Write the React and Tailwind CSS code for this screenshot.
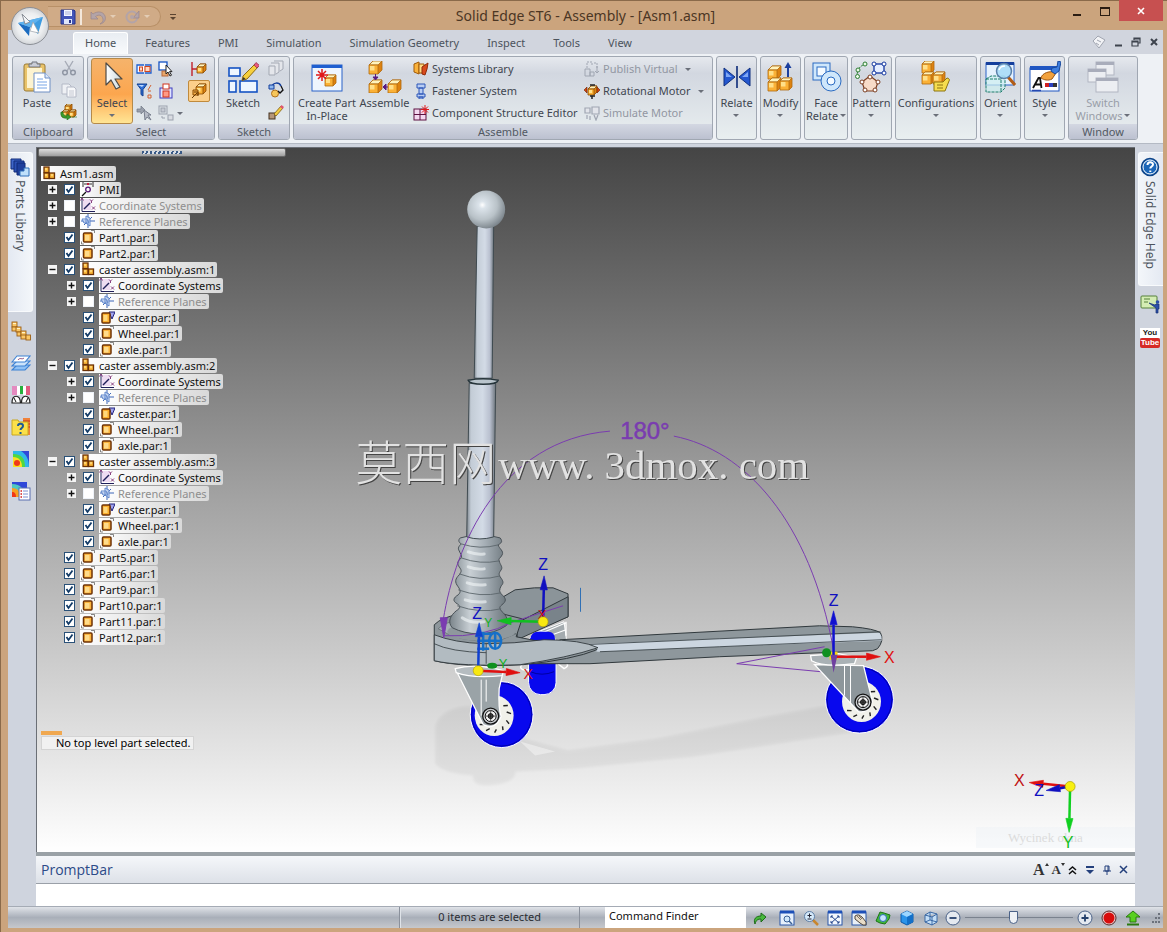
import React from "react";

/* ---------- small drawing helpers ---------- */

function Cube({ x, y, s }) {
  const d = Math.round(s * 0.28);
  return (
    <g stroke={s > 10 ? "#b06a10" : "#8a4a00"} strokeWidth="0.8" strokeLinejoin="round">
      <path d={`M${x} ${y + d}l${d} ${-d}h${s - d}v${s - d}l${-d} ${d}z`} fill="#dd8210" />
      <path d={`M${x} ${y + d}l${d} ${-d}h${s - d}l${-d} ${d}z`} fill="#fff3bc" />
      <rect x={x} y={y + d} width={s - d} height={s - d} fill="#fbb136" />
      <rect x={x + 1} y={y + d + 1} width={(s - d) / 2} height={(s - d) / 2} fill="#ffe08a" stroke="none" />
    </g>
  );
}

function Icon({ w = 16, h = 16, box, children }) {
  return (
    <svg width={w} height={h} viewBox={box || `0 0 ${w} ${h}`} fill="none" className="block shrink-0" aria-hidden="true">
      {children}
    </svg>
  );
}

const icons = {
  save: (
    <Icon>
      <path d="M1 1h13l1 1v13H1z" fill="#4355b8" stroke="#27358a" />
      <rect x="4" y="1" width="8" height="6" fill="#f4f6ff" />
      <path d="M5 3h6M5 5h6" stroke="#a8b0d8" />
      <rect x="4" y="10" width="8" height="5" fill="#dfe5fa" />
      <rect x="9" y="11" width="2" height="3" fill="#27358a" />
    </Icon>
  ),
  undo: (
    <Icon>
      <path d="M1 3v7h7L5.500 7.500C9 5 12 6 13 10c.5 2-1 4-3 5 5-1 6-5 5-8-2-5-8-5-12-2z" fill="#b3a4a8" stroke="#99858a" strokeWidth="0.7" />
    </Icon>
  ),
  redo: (
    <Icon>
      <circle cx="8" cy="8" r="5.500" stroke="#b3a4a8" strokeWidth="2" />
      <path d="M15 2v7H9z" fill="#b3a4a8" stroke="#99858a" strokeWidth="0.7" />
      <circle cx="8" cy="8" r="2" fill="#b3a4a8" />
    </Icon>
  ),
  paste: (
    <Icon w={32} h={32}>
      <rect x="3" y="3" width="21" height="27" rx="2" fill="#e9c36a" stroke="#9a7a35" />
      <rect x="6" y="7" width="15" height="20" fill="#fdf3d0" />
      <path d="M8 6V3h3V1h5v2h3v3z" fill="#c9ccd6" stroke="#70747e" />
      <path d="M13 12h11l5 5v14H13z" fill="#fff" stroke="#6f8fc4" />
      <path d="M24 12v5h5" fill="#dbe8fb" stroke="#6f8fc4" />
      <path d="M16 18h6M16 21h10M16 24h10M16 27h10" stroke="#77a4e6" />
    </Icon>
  ),
  cut: (
    <Icon>
      <path d="M4 1l6 10M12 1L6 11" stroke="#a6abb6" strokeWidth="1.4" />
      <circle cx="4" cy="12.500" r="2.300" stroke="#8f96a4" strokeWidth="1.500" />
      <circle cx="12" cy="12.500" r="2.300" stroke="#8f96a4" strokeWidth="1.500" />
    </Icon>
  ),
  copy: (
    <Icon>
      <path d="M1 2h7l2 2v8H1z" fill="#eef0f4" stroke="#b4b9c6" />
      <path d="M6 5h7l2 2v8H6z" fill="#f7f8fa" stroke="#b4b9c6" />
      <path d="M8 9h5M8 11h5M8 13h5" stroke="#c4c8d2" />
    </Icon>
  ),
  replacePart: (
    <Icon w={18}>
      <Cube x={5} y={0} s={7} />
      <Cube x={2} y={6} s={7} />
      <Cube x={9} y={6} s={7} />
      <path d="M1 8c-1 4 2 7 6 6l0 2 4-3-4-3v2C4 12 3 10 3 8zM12 13h5" fill="#3a9a2c" stroke="#23701c" strokeWidth="0.6" />
    </Icon>
  ),
  arrow: (
    <Icon w={32} h={32}>
      <defs>
        <linearGradient id="cur" x1="0" x2="1"><stop offset="0" stopColor="#fff" /><stop offset="1" stopColor="#c9d8dd" /></linearGradient>
      </defs>
      <path d="M10 2v22l5-5 5 9 4-2-5-8h7z" fill="url(#cur)" stroke="#4d4a45" strokeWidth="1.200" strokeLinejoin="round" />
    </Icon>
  ),
  sel1: (
    <Icon>
      <path d="M8 4H1v8h7M9 4h6v8H9" fill="#fff" stroke="#1d5fd0" strokeWidth="1.300" />
      <rect x="3.500" y="6" width="3" height="4" fill="#ffd7c0" stroke="#d2451e" />
      <rect x="9" y="5.500" width="5" height="5" fill="#ffd7c0" stroke="#d2451e" />
    </Icon>
  ),
  sel2: (
    <Icon>
      <rect x="1" y="1" width="8" height="8" fill="#fff" stroke="#1553c4" strokeWidth="1.300" />
      <rect x="4" y="10" width="6" height="5" fill="#e8a86e" stroke="#b8683a" />
      <path d="M8 4v9l2-2 2 4 1.500-.8-2-3.600H14z" fill="#fff" stroke="#222" />
    </Icon>
  ),
  sel3: (
    <Icon>
      <path d="M1 1h10L7 6.500V13l-2-1.500v-5z" fill="#2d6fd8" stroke="#123f8f" />
      <path d="M2 2h6L6 4z" fill="#bcd7ff" />
      <path d="M15 2l-3 5M12 8h3M12 12h3v3h-3z" stroke="#d2602e" />
    </Icon>
  ),
  sel4: (
    <Icon>
      <rect x="2" y="5" width="12" height="10" fill="#dfe4ff" stroke="#3c3cc0" />
      <rect x="5" y="1" width="6" height="5" fill="#fff" stroke="#d2351e" />
      <rect x="5" y="8" width="6" height="6" fill="#ff9a86" stroke="#d2351e" />
    </Icon>
  ),
  sel5: (
    <Icon>
      <path d="M1 4h4V1l4 4-4 4V7H1z" fill="#9aa0ac" stroke="#777e8c" strokeWidth="0.8" />
      <path d="M8 5l1 10 2-3 4 3-3-5h3z" fill="#b7bcc7" stroke="#777e8c" />
    </Icon>
  ),
  sel6: (
    <Icon>
      <rect x="1" y="1" width="8" height="8" stroke="#9ba1ad" />
      <rect x="3" y="3" width="4" height="4" fill="#c6cad3" stroke="#9ba1ad" />
      <rect x="10" y="10" width="5" height="5" fill="#d9dce2" stroke="#9ba1ad" />
      <path d="M4 11v2h3" stroke="#9ba1ad" />
    </Icon>
  ),
  sel7: (
    <Icon>
      <path d="M1 1v14M1 8h6" stroke="#c2202a" strokeWidth="1.400" />
      <Cube x={6} y={3} s={9} />
    </Icon>
  ),
  sel8: (
    <Icon>
      <Cube x={5} y={1} s={10} />
      <path d="M2 7h5v5H2z" fill="#f7b04a" stroke="#8a4a00" />
      <path d="M1 15l5-5M3 9h4v4" stroke="#6b3a00" />
    </Icon>
  ),
  sketch: (
    <Icon w={32} h={32}>
      <rect x="2" y="7" width="11" height="8" fill="#eef6ff" stroke="#1553c4" strokeWidth="1.600" />
      <rect x="2" y="20" width="7" height="11" fill="#eef6ff" stroke="#1553c4" strokeWidth="1.600" />
      <rect x="13" y="20" width="17" height="11" fill="#eef6ff" stroke="#1553c4" strokeWidth="1.600" />
      <path d="M16 15L28 3l3 3-11 12-5 1.500z" fill="#f6cf3c" stroke="#8f6a12" />
      <path d="M27 4l2-2.500 3.500 3L30 7z" fill="#e85a80" stroke="#8f2a44" strokeWidth="0.7" />
      <path d="M15 19.500l1.500-3.500 2 2z" fill="#333" />
    </Icon>
  ),
  sk1: (
    <Icon>
      <path d="M6 1l9 0v8l-3 2M3 3h8v9l-3 2M1 6h6v9H1z" fill="#e4e6eb" stroke="#a3a8b3" />
    </Icon>
  ),
  sk2: (
    <Icon>
      <path d="M4 5c1-5 7-5 9-1" stroke="#153f9c" strokeWidth="1.500" />
      <path d="M1 3h5v4H1z" fill="#8fb8ee" stroke="#153f9c" />
      <circle cx="7" cy="11.500" r="3.500" fill="#f6c65a" stroke="#b0701a" />
      <path d="M13 4l2 4-3 3-2-2" stroke="#111" strokeWidth="1.300" />
    </Icon>
  ),
  sk3: (
    <Icon>
      <rect x="1" y="9" width="6" height="6" fill="#b4967a" stroke="#43301f" />
      <path d="M6 10l7-8 2 2-7 8z" fill="#f3cc3f" stroke="#7d5c10" strokeWidth="0.8" />
      <path d="M12 3l1.500-2L16 3l-1.500 2z" fill="#e0566f" />
    </Icon>
  ),
  createPart: (
    <Icon w={32} h={32}>
      <rect x="1" y="4" width="30" height="26" fill="#eef5fe" stroke="#2a62c8" />
      <rect x="1" y="4" width="30" height="3" fill="#1f5fd0" />
      <Cube x={14} y={14} s={11} />
      <path d="M11 8v12M5 14h12M7 10l8 8M15 10l-8 8" stroke="#e01818" strokeWidth="1.500" />
    </Icon>
  ),
  assemble: (
    <Icon w={34} h={32}>
      <Cube x={1} y={0} s={13} />
      <Cube x={1} y={19} s={13} />
      <Cube x={20} y={19} s={13} />
      <path d="M7.500 13v3M5 16h5l-2.500 3zM20 26h-2M18 23v6l-3-3z" stroke="#5a1a80" fill="#5a1a80" />
    </Icon>
  ),
  sysLib: (
    <Icon>
      <path d="M1 3l5-2v12l-5-2z" fill="#f9b23c" stroke="#a05a08" />
      <path d="M6 3h5v9H6z" fill="#ffd982" stroke="#a05a08" />
      <path d="M9 6l6-4-1 6-2 6-3-1z" fill="#d84a1c" stroke="#8f2a0a" />
    </Icon>
  ),
  fastener: (
    <Icon>
      <path d="M4 1h8v4H4zM6 5h4v6H6zM4 11h8v3H4zM6 14h4v2H6z" fill="#b9cdf3" stroke="#2d57b8" />
    </Icon>
  ),
  cse: (
    <Icon>
      <rect x="1" y="4" width="12" height="11" fill="#f4d8f0" stroke="#5d1040" />
      <path d="M7 4v11M1 9.500h12" stroke="#5d1040" />
      <path d="M12 0v9M8 4.500h8M9 1.500l6 6M15 1.500l-6 6" stroke="#e01818" />
    </Icon>
  ),
  publish: (
    <Icon>
      <path d="M3 7V1h5v3M10 2h3v5" stroke="#a0a6b2" strokeDasharray="2 1" />
      <path d="M1 8h5v7H1zM6 11h4v4H6zM13 5v7l2-2M13 12l-2-2" stroke="#a0a6b2" />
    </Icon>
  ),
  motor: (
    <Icon>
      <Cube x={4} y={3} s={9} />
      <path d="M0 7l3-3v6zM16 7l-3-3v6z" fill="#d2450e" stroke="#6a2000" strokeWidth="0.6" />
      <path d="M6 2h5M8 13v3M6 13h5" stroke="#222" strokeWidth="1.500" />
    </Icon>
  ),
  simMotor: (
    <Icon>
      <path d="M1 3h5v5H1zM8 2h7v7H8zM3 10v4M6 11v4M10 10l2 5 2-5" stroke="#a0a6b2" strokeWidth="1.200" fill="#e2e4ea" />
    </Icon>
  ),
  relate: (
    <Icon w={32} h={32}>
      <path d="M4 7v18l11-9zM30 7v18l-11-9z" fill="#2457cf" stroke="#10307f" />
      <path d="M6 11l6 5H6zM28 11l-6 5h6z" fill="#7fa8f5" />
      <path d="M17 5v22" stroke="#0c2a78" strokeWidth="1.600" />
    </Icon>
  ),
  modify: (
    <Icon w={32} h={32}>
      <Cube x={4} y={5} s={13} />
      <Cube x={4} y={17} s={13} />
      <Cube x={16} y={17} s={12} />
      <path d="M24 16V6" stroke="#1b3f9e" strokeWidth="2" />
      <path d="M20.500 7L24 1l3.500 6z" fill="#1b3f9e" />
    </Icon>
  ),
  face: (
    <Icon w={32} h={32}>
      <rect x="3" y="2" width="17" height="17" fill="#cfe7fb" stroke="#2a6bc2" />
      <rect x="7" y="6" width="9" height="9" fill="#f4faff" stroke="#2a6bc2" />
      <circle cx="21" cy="20" r="10" fill="#cfe7fb" stroke="#2a6bc2" />
      <circle cx="21" cy="20" r="4" fill="#f4faff" stroke="#2a6bc2" />
    </Icon>
  ),
  pattern: (
    <Icon w={32} h={32}>
      <path d="M2 16c0-8 3-12 10-13" stroke="#2c7c33" strokeDasharray="2 1" />
      <g fill="#eafbe6" stroke="#2c7c33"><circle cx="2.500" cy="15.500" r="2" /><circle cx="3" cy="9" r="2" /><circle cx="10" cy="3" r="2" /></g>
      <rect x="19" y="3" width="10" height="9" fill="#e4edff" stroke="#1437a0" strokeWidth="1.300" />
      <g fill="#fff" stroke="#1437a0"><circle cx="19" cy="3" r="2" /><circle cx="29" cy="3" r="2" /><circle cx="19" cy="12" r="2" /><circle cx="29" cy="12" r="2" /></g>
      <path d="M15 15l8 6-3 9H10L7 21z" fill="#f8dcc8" stroke="#7c3f22" strokeWidth="1.200" />
      <g fill="#fff" stroke="#7c3f22"><circle cx="15" cy="16" r="2" /><circle cx="23" cy="21" r="2" /><circle cx="20" cy="29" r="2" /><circle cx="10" cy="29" r="2" /><circle cx="7" cy="21" r="2" /></g>
    </Icon>
  ),
  config: (
    <Icon w={32} h={32}>
      <Cube x={2} y={0} s={12} />
      <Cube x={2} y={11} s={12} />
      <Cube x={13} y={11} s={12} />
      <path d="M14 21h9l4-4c2 0 3 2 2 3l-4 10H14z" fill="#f6dd4e" stroke="#8c7410" />
      <path d="M17 24h6M17 27h6" stroke="#8c7410" />
    </Icon>
  ),
  orient: (
    <Icon w={32} h={32}>
      <rect x="2" y="2" width="28" height="22" fill="#e6f2fd" stroke="#2a62c8" />
      <rect x="2" y="1" width="28" height="3" fill="#153f9c" />
      <path d="M2 18l5-3h14v12l-4 4H2zM2 18h15v13M17 18l4-3" fill="#cdeef0" fillOpacity="0.7" stroke="#1d7d6c" strokeDasharray="3 1" />
      <path d="M24 16l7 8" stroke="#b25c16" strokeWidth="3" />
      <circle cx="20" cy="10" r="7.500" fill="#a9dbf7" fillOpacity="0.9" stroke="#5a7fa8" strokeWidth="1.500" />
      <path d="M15 9c1-3 4-4 6-4" stroke="#fff" strokeWidth="1.500" />
    </Icon>
  ),
  style: (
    <Icon w={32} h={32}>
      <rect x="1" y="7" width="29" height="23" fill="#fff" stroke="#1f56c2" />
      <rect x="1" y="5" width="29" height="4" fill="#1f56c2" />
      <path d="M4 27L9.500 17h1.500l1.500 10M6.500 23.500h5" stroke="#111" strokeWidth="1.800" />
      <path d="M12 17c1-5 9-8 15-5l-4 6c-4 2-8 1-11-1z" fill="#f2a13c" stroke="#9c5510" />
      <path d="M22 10l1-3 5-1 1-6 3 1-2 9-4 3z" fill="#3f7fe0" stroke="#1a4a9c" />
      <rect x="16" y="22" width="4" height="4" fill="#d02020" /><rect x="20" y="22" width="4" height="4" fill="#2a3fc0" /><rect x="24" y="22" width="4" height="4" fill="#333" />
      <path d="M3 29.500h9" stroke="#2548b0" strokeWidth="1.500" />
    </Icon>
  ),
  windows: (
    <Icon w={32} h={32}>
      <g fill="#eceef2" stroke="#b2b6c2">
        <rect x="9" y="1" width="18" height="13" /><rect x="1" y="8" width="18" height="13" /><rect x="9" y="17" width="22" height="14" />
      </g>
      <path d="M9 2.500h18M1 9.500h18M9 18.500h22" stroke="#a9adbb" strokeWidth="3" />
    </Icon>
  ),
  asm: (
    <Icon>
      <g fill="#fcb838" stroke="#6d3206" strokeWidth="1.300"><rect x="3" y="2" width="5" height="5.500" /><rect x="3" y="8" width="5" height="5.500" /><rect x="8.500" y="8" width="5" height="5.500" /></g>
      <path d="M4 4h2M4 10h2M10 10h2" stroke="#ffeeb0" />
    </Icon>
  ),
  pmi: (
    <Icon>
      <path d="M3 1v5M13 1v5M4 3h3M9 3h3" stroke="#333" />
      <path d="M7 2l2 2M9 2L7 4" stroke="#c02040" />
      <circle cx="8" cy="8.500" r="2.300" stroke="#5a1a78" strokeWidth="1.300" />
      <path d="M2 15l4-4" stroke="#111" strokeWidth="1.300" />
    </Icon>
  ),
  coord: (
    <Icon>
      <path d="M2 1v13.500h13" stroke="#20205a" />
      <path d="M3 2h8v11H3z" fill="#eedcf2" />
      <path d="M4 12l6-6" stroke="#20205a" strokeWidth="1.500" />
      <path d="M.5 3.500L2 1l1.500 2.500M10 2.500l1.500 1.500L13 2.500M11.500 4v2M12 9.500l3 3M15 9.500l-3 3" stroke="#7a2a70" strokeWidth="0.9" />
    </Icon>
  ),
  planes: (
    <Icon>
      <path d="M1 8h14M8 1v14M4 12l8-8" stroke="#3c66b8" />
      <path d="M2 6h5l2 4H4zM6 3l4 2v8l-4-3z" stroke="#5f86cc" fill="#dbe8fb" fillOpacity="0.6" />
    </Icon>
  ),
  part: (
    <Icon>
      <path d="M1.500 12.500v2.500h2.500M11 1.500h3.500V4" stroke="#555" strokeWidth="0.7" />
      <rect x="3.500" y="4" width="8.500" height="9" rx="1" fill="#fcb43c" stroke="#6d3206" strokeWidth="1.500" />
      <path d="M5 6h4.500v5.500H5z" fill="#ffdb8a" />
    </Icon>
  ),
  partFix: (
    <Icon>
      <path d="M10 3h6l-3 7z" fill="#a0a4f0" stroke="#20207a" />
      <rect x="3" y="4" width="8" height="10" rx="1" fill="#fcae2c" stroke="#6d3206" strokeWidth="1.500" />
      <path d="M4.500 6h4v6h-4z" fill="#ffd87c" />
    </Icon>
  ),
  partsLib: (
    <Icon w={20} h={20}>
      <path d="M1 1h10v10H1z" fill="#3f66c8" stroke="#102a78" />
      <path d="M4 3h10v11H4z" fill="#2b50b4" stroke="#102a78" />
      <path d="M7 5h8v12H7z" fill="#1e3f9c" stroke="#102a78" />
      <path d="M10 18V13h4v-3h5v8z" fill="#bfe0fb" stroke="#2f6fb8" />
    </Icon>
  ),
  family: (
    <Icon w={20} h={20}>
      <g fill="#fbc766" stroke="#9c5f14" strokeWidth="0.9">
        <rect x="1" y="1" width="5" height="5" /><rect x="1" y="6" width="5" height="4" />
        <rect x="5" y="6" width="5" height="5" /><rect x="6" y="11" width="4" height="4" />
        <rect x="10" y="10" width="5" height="5" /><rect x="10" y="14" width="5" height="4" /><rect x="15" y="14" width="4.500" height="5" />
      </g>
      <path d="M2 2.500h3M6 7.500h3M11 11.500h3" stroke="#fff3c8" />
    </Icon>
  ),
  layers: (
    <Icon w={20} h={20}>
      <g stroke="#3d82d4" strokeWidth="1.100"><path d="M1 17l5-5h13l-5 5z" fill="#8fc1f5" /><path d="M1 13l5-5h13l-5 5z" fill="#cbe3fb" /><path d="M1 9l5-6h13l-5 6z" fill="#fff" /></g>
      <path d="M7 7c2-3 4 0 6-2" stroke="#8a4a7a" />
    </Icon>
  ),
  sensors: (
    <Icon w={20} h={20}>
      <path d="M1 1h5v9H1z" fill="#e48ac0" /><path d="M6 1h3v9H6z" fill="#fff" /><path d="M9 1h3v8H9z" fill="#25b03c" /><path d="M12 1h3v9h-3z" fill="#fff" /><path d="M15 1h4v9h-4z" fill="#e05a80" />
      <path d="M1 18c0-9 8-9 8.500 0zM10.500 18c0-9 8-9 8.500 0z" fill="#fff" stroke="#222" strokeWidth="1.200" />
      <path d="M5 17l-2-4M15 17l2-4" stroke="#111" />
    </Icon>
  ),
  engRef: (
    <Icon w={20} h={20}>
      <path d="M12 1h7v17h-7z" fill="#f0823c" /><path d="M12 4h7M12 7h7M12 10h7" stroke="#c03418" />
      <path d="M1 3h6l1 2h9v13H1z" fill="#fbe04a" stroke="#c8a820" />
      <path d="M7 9c0-3 5-3 5 0 0 2-2.500 2-2.500 4M9.500 15v2" stroke="#1c5a96" strokeWidth="2" />
    </Icon>
  ),
  heat: (
    <Icon w={20} h={20}>
      <rect x="2" y="2" width="16" height="16" fill="#3048d8" />
      <path d="M2 2h8c5 3 8 8 8 16H2z" fill="#30b8e8" /><path d="M2 5c9 0 12 5 12 13H2z" fill="#50d840" /><path d="M2 8c6 0 9 4 9 10H2z" fill="#f8e020" />
      <circle cx="6" cy="14" r="3" fill="#f03818" />
    </Icon>
  ),
  heatList: (
    <Icon w={20} h={20}>
      <rect x="1" y="1" width="15" height="15" fill="#3048d8" />
      <path d="M1 3c9 0 12 5 13 13H1z" fill="#50c8c0" /><path d="M1 7c6 0 8 4 9 9H1z" fill="#f8a020" /><path d="M1 11c3 0 4 2 4 5H1z" fill="#f03818" />
      <rect x="8" y="7" width="11" height="12" fill="#fff" stroke="#5a6fb0" />
      <path d="M12 10h5M12 13h5M12 16h5" stroke="#7a90d0" /><path d="M9.500 10h1.500M9.500 13h1.500M9.500 16h1.500" stroke="#d02020" strokeWidth="1.500" />
    </Icon>
  ),
  help: (
    <Icon w={20} h={20}>
      <circle cx="10" cy="10" r="8.500" fill="#1c66b8" stroke="#0e4488" strokeWidth="1.500" />
      <circle cx="10" cy="10" r="7" stroke="#fff" />
      <path d="M7.500 8c0-3.500 5.500-3.500 5.500-.5 0 2-2.700 2-2.700 4M10.300 13.500v1.500" stroke="#fff" strokeWidth="2" />
    </Icon>
  ),
  teach: (
    <Icon w={20} h={20}>
      <rect x="1" y="2" width="16" height="12" rx="1" fill="#d4ecb4" stroke="#55803a" />
      <path d="M4 5h6M4 8h4" stroke="#55803a" />
      <path d="M9 9l6 2 1-1h3v5h-1v4h-2v-5z" fill="#2c4fa8" stroke="#173274" strokeWidth="0.700" />
      <circle cx="17.500" cy="8" r="1.800" fill="#2c4fa8" />
    </Icon>
  ),
};

/* ---------- title bar ---------- */

function TitleBar() {
  return (
    <header className="flex h-[30px] items-stretch text-[#4b3624]">
      <div className="flex flex-1 basis-0 items-center pt-[3px]">
        <div className="ml-10 flex h-[21px] items-center gap-1 rounded-r-full border border-l-0 border-[#b89067] bg-[#d0ab87] pl-3 pr-2.5">
          <button aria-label="Save">{icons.save}</button>
          <span className="h-4 w-0.5 bg-[#f3e7da]" />
          <button aria-label="Undo" className="ml-1">{icons.undo}</button>
          <Chevron className="border-t-[#e3cdb6]" />
          <button aria-label="Redo" className="ml-1">{icons.redo}</button>
          <Chevron className="border-t-[#e3cdb6]" />
        </div>
        <button aria-label="Customize toolbar" className="ml-2 flex w-2 flex-col items-center gap-0.5">
          <span className="h-px w-1.5 bg-[#5b4430]" />
          <Chevron className="border-t-[#5b4430]" />
        </button>
      </div>
      <h1 className="pt-1.5 font-['Noto_Sans',sans-serif] text-[14px] leading-5">Solid Edge ST6 - Assembly - [Asm1.asm]</h1>
      <div className="flex flex-1 basis-0 items-start justify-end">
        <button aria-label="Minimize" className="flex h-[21px] w-7 items-center justify-center"><span className="mt-2 h-0.5 w-2 bg-[#2b1d12]" /></button>
        <button aria-label="Maximize" className="flex h-[21px] w-7 items-center justify-center"><span className="mt-0.5 h-[9px] w-2.5 border border-t-2 border-[#2b1d12]" /></button>
        <button aria-label="Close" className="flex h-[21px] w-11 items-center justify-center bg-[#c75050]">
          <Icon w={8} h={8}><path d="M1 1l6 6M7 1L1 7" stroke="#fff" strokeWidth="1.600" /></Icon>
        </button>
      </div>
    </header>
  );
}

function Chevron({ className = "border-t-[#6a6f79]" }) {
  return <span className={"inline-block h-0 w-0 border-x-[3px] border-t-[3px] border-x-transparent " + className} />;
}

const tabs = ["Features", "PMI", "Simulation", "Simulation Geometry", "Inspect", "Tools", "View"];

function TabRow() {
  return (
    <nav className="flex h-6 items-end bg-[#d1d5de] pl-[65px] text-[11px] text-[#4c535c]">
      <a href="#home" className="mr-[3px] rounded-t-[3px] border border-b-0 border-white bg-linear-to-b from-[#e9edf2] to-[#f8fafc] px-[11px] pb-0.5 leading-[19px]">Home</a>
      {tabs.map((t) => (
        <a key={t} href={"#" + t.toLowerCase().replace(" ", "-")} className="px-[14px] pb-0.5 leading-[19px]">{t}</a>
      ))}
      <div className="ml-auto flex h-full items-center gap-[9px] pr-[5px]">
        <Icon w={14} h={14}><path d="M1 6l5-5 7 4-6 8z" fill="#f2f3f6" stroke="#a0a5b0" /><path d="M5 5l4 2M4 8l3 2" stroke="#a0a5b0" /></Icon>
        <button aria-label="Minimize document"><Icon w={7} h={10}><path d="M0 8.500h7" stroke="#3d434d" strokeWidth="2" /></Icon></button>
        <button aria-label="Restore document"><Icon w={10} h={10}><path d="M3 3V1h6v5H7M1 4h6v5H1zM1 5h6M3 2h6" stroke="#3d434d" strokeWidth="1.200" /></Icon></button>
        <button aria-label="Close document"><Icon w={8} h={8}><path d="M1 1l6 6M7 1L1 7" stroke="#3d434d" strokeWidth="2" /></Icon></button>
      </div>
    </nav>
  );
}

/* ---------- ribbon ---------- */

function Group({ label, width, children }) {
  return (
    <section className={"flex shrink-0 flex-col overflow-hidden rounded-[3px] border border-[#a0a7b2] bg-linear-to-b from-[#e6e9ee] from-0% via-[#d2d7e0] via-20% to-[#e9eff0] " + width}>
      <div className="flex flex-1 justify-center pt-1">{children}</div>
      {label && (
        <h2 className="h-[15px] bg-linear-to-b from-[#d3d7e2] to-[#bcc1d0] text-center text-[11px] leading-[15px] text-[#525963]">{label}</h2>
      )}
    </section>
  );
}

function Big({ icon, lines, drop, muted, className = "" }) {
  return (
    <button className={"flex flex-col items-center text-[11px] leading-[13px] " + (muted ? "text-[#999ea8] " : "text-[#3f4650] ") + className}>
      <span className="mb-[3px]">{icons[icon]}</span>
      {lines.map((l, i) => (
        <span key={l} className="flex items-center gap-0.5 whitespace-nowrap">
          {l}
          {drop && lines.length > 1 && i === lines.length - 1 && <Chevron />}
        </span>
      ))}
      {drop && lines.length === 1 && <Chevron className="mt-[5px] border-t-[#6a6f79]" />}
    </button>
  );
}

function Small({ icon, label, drop, muted }) {
  return (
    <button className={"flex h-[22px] items-center gap-[3px] whitespace-nowrap text-[11px] " + (muted ? "text-[#9297a2]" : "text-[#3f4650]")}>
      {icons[icon]}
      <span>{label}</span>
      {drop && <Chevron className="ml-1 border-t-[#6a6f79]" />}
    </button>
  );
}

function IconCol({ names, className = "" }) {
  return (
    <div className={"flex flex-col " + className}>
      {names.map((n) => (
        <button key={n} aria-label={n} className="flex h-[22px] w-[22px] items-center justify-center">{icons[n]}</button>
      ))}
    </div>
  );
}

function Ribbon() {
  return (
    <div className="flex h-[90px] gap-[3px] border-b border-[#b4bac4] bg-[#eef1f5] px-1 pt-0.5 pb-[3px]">
      <Group label="Clipboard" width="w-[72px]">
        <Big icon="paste" lines={["Paste"]} className="w-[42px]" />
        <IconCol names={["cut", "copy", "replacePart"]} className="-mt-1" />
      </Group>
      <Group label="Select" width="w-[128px]">
        <div className="-mt-[3px] flex w-full pl-[3px]">
          <div className="h-[66px] w-[42px] rounded-[3px] border border-[#b58a4a] bg-linear-to-b from-[#f5b36b] via-[#fca64e] via-55% to-[#ffe594] pt-0.5">
            <Big icon="arrow" lines={["Select"]} drop className="w-full" />
          </div>
          <IconCol names={["sel1", "sel3", "sel5"]} />
          <IconCol names={["sel2", "sel4", "sel6"]} />
          <button aria-label="More selection tools" className="mt-11 flex h-[22px] items-center"><Chevron /></button>
          <div className="ml-auto flex flex-col pr-1">
            <button aria-label="Select by plane" className="flex h-[22px] w-[22px] items-center justify-center">{icons.sel7}</button>
            <button aria-label="Part priority" className="flex h-[22px] w-[22px] items-center justify-center rounded-[2px] border border-[#c08a3c] bg-[#fccf8a]">{icons.sel8}</button>
          </div>
        </div>
      </Group>
      <Group label="Sketch" width="w-[72px]">
        <Big icon="sketch" lines={["Sketch"]} className="w-[44px]" />
        <IconCol names={["sk1", "sk2", "sk3"]} className="-mt-1" />
      </Group>
      <Group label="Assemble" width="w-[420px]">
        <div className="flex w-full pl-1">
          <Big icon="createPart" lines={["Create Part", "In-Place"]} className="w-[58px]" />
          <Big icon="assemble" lines={["Assemble"]} className="w-[57px]" />
          <div className="-mt-[3px] w-[171px]">
            <Small icon="sysLib" label="Systems Library" />
            <Small icon="fastener" label="Fastener System" />
            <Small icon="cse" label="Component Structure Editor" />
          </div>
          <div className="-mt-[3px]">
            <Small icon="publish" label="Publish Virtual" drop muted />
            <Small icon="motor" label="Rotational Motor" drop />
            <Small icon="simMotor" label="Simulate Motor" muted />
          </div>
        </div>
      </Group>
      <Group width="w-[41px]"><Big icon="relate" lines={["Relate"]} drop /></Group>
      <Group width="w-[41px]"><Big icon="modify" lines={["Modify"]} drop /></Group>
      <Group width="w-[44px]"><Big icon="face" lines={["Face", "Relate"]} drop /></Group>
      <Group width="w-[41px]"><Big icon="pattern" lines={["Pattern"]} drop /></Group>
      <Group width="w-[82px]"><Big icon="config" lines={["Configurations"]} drop /></Group>
      <Group width="w-[41px]"><Big icon="orient" lines={["Orient"]} drop /></Group>
      <Group width="w-[41px]"><Big icon="style" lines={["Style"]} drop /></Group>
      <Group label="Window" width="w-[70px]"><Big icon="windows" lines={["Switch", "Windows"]} drop muted /></Group>
    </div>
  );
}

/* ---------- side rails ---------- */

function LeftRail() {
  return (
    <aside className="flex w-7 shrink-0 flex-col items-start bg-[#cfd4de] pt-[5px]">
      <button className="flex h-[160px] w-[25px] flex-col items-center gap-0.5 rounded-r-[3px] border border-l-0 border-[#f8fafc] bg-linear-to-r from-[#e4e9f2] to-[#f3f6fa] pt-[5px] text-[12px] leading-4 text-[#4c535c]">
        {icons.partsLib}
        <span className="whitespace-nowrap [writing-mode:vertical-rl]">Parts Library</span>
      </button>
      <div className="mt-[9px] flex flex-col gap-3 pl-[3px]">
        {["family", "layers", "sensors", "engRef", "heat", "heatList"].map((n) => (
          <button key={n} aria-label={n}>{icons[n]}</button>
        ))}
      </div>
    </aside>
  );
}

function RightRail() {
  return (
    <aside className="flex w-7 shrink-0 flex-col items-end bg-[#cfd4de] pt-[5px]">
      <button className="flex h-[134px] w-[25px] flex-col items-center gap-1 rounded-l-[3px] border border-r-0 border-[#f8fafc] bg-linear-to-r from-[#f3f6fa] to-[#e4e9f2] pt-1 pr-0.5 text-[12px] leading-4 text-[#4c535c]">
        {icons.help}
        <span className="whitespace-nowrap [writing-mode:vertical-rl]">Solid Edge Help</span>
      </button>
      <div className="mt-2 flex flex-col items-center gap-3.5 pr-[3px]">
        <button aria-label="Learn">{icons.teach}</button>
        <button className="flex w-5 flex-col items-stretch text-center font-['Liberation_Sans',sans-serif] text-[8px] font-bold leading-[10px]">
          <span className="bg-white text-[#222]">You</span>
          <span className="rounded-[2px] bg-[#d62a26] text-white">Tube</span>
        </button>
      </div>
    </aside>
  );
}

/* ---------- part tree ---------- */

const casterChildren = [
  ["Coordinate Systems", "coord", "+", true],
  ["Reference Planes", "planes", "+", false],
  ["caster.par:1", "partFix", "", true],
  ["Wheel.par:1", "part", "", true],
  ["axle.par:1", "part", "", true],
];

const rows = [
  [0, "PMI", "pmi", "+", true],
  [0, "Coordinate Systems", "coord", "+", false],
  [0, "Reference Planes", "planes", "+", false],
  [0, "Part1.par:1", "part", "", true],
  [0, "Part2.par:1", "part", "", true],
  ...[1, 2, 3].flatMap((n) => [
    [0, "caster assembly.asm:" + n, "asm", "−", true],
    ...casterChildren.map((c) => [1, ...c]),
  ]),
  ...[5, 6, 9, 10, 11, 12].map((n) => [0, `Part${n}.par:1`, "part", "", true]),
];

const chip = "flex h-[15px] items-center rounded-r-[2px] bg-linear-to-r from-white to-[#d9d9d9] pr-0.5";

function TreeRow({ row, index }) {
  const [level, text, icon, sign, checked] = row;
  const id = "node-" + index;
  return (
    <li className={"flex h-4 items-center " + (level ? "pl-[26px]" : "pl-[7px]")}>
      <span className="w-4">
        {sign && (
          <button aria-label={(sign === "+" ? "Expand " : "Collapse ") + text} className="block">
            <Icon w={9} h={9}>
              <rect width="9" height="9" fill="#f4f4f4" />
              <path d={sign === "+" ? "M1.500 4.500h6M4.500 1.500v6" : "M1.500 4.500h6"} stroke="#111" strokeWidth="1.400" />
            </Icon>
          </button>
        )}
      </span>
      <span className="relative mr-[5px] block size-[11px]">
        <input id={id} type="checkbox" defaultChecked={checked} className="peer block size-[11px] appearance-none border border-[#eef2f8] bg-white checked:border-[#2a5178]" />
        <svg viewBox="0 0 11 11" className="pointer-events-none absolute inset-0 hidden peer-checked:block" fill="none" aria-hidden="true">
          <path d="M2.500 5l2 3 4-5.500" stroke="#123a66" strokeWidth="1.800" />
        </svg>
      </span>
      <label htmlFor={id} className={chip + " gap-[3px] whitespace-nowrap " + (checked ? "text-[#111]" : "text-[#8e8e8e]")}>
        {icons[icon]}
        {text}
      </label>
    </li>
  );
}

function Tree() {
  return (
    <div className="relative w-[249px] pl-px text-[11px] leading-[15px]">
      <div className="flex h-[9px] items-center justify-center rounded-[2px] border border-[#666] bg-linear-to-b from-[#dedede] to-[#9f9f9f]">
        <span className="h-[3px] w-10 bg-[repeating-linear-gradient(110deg,#3a5a86_0_2px,#d8dde4_2px_4px)]" />
      </div>
      <ul className="mt-2 pl-[3px]">
        <li className="flex h-4 items-center">
          <span className={chip + " gap-[3px] text-[#111]"}>{icons.asm}Asm1.asm</span>
        </li>
        {rows.map((r, i) => <TreeRow key={i} row={r} index={i} />)}
      </ul>
      <div className="mt-[86px] flex flex-col items-start pl-[3px]">
        <span className="h-1 w-[21px] bg-[#f0a850]" />
        <p className="mt-px border border-[#d4d4d4] bg-[#f1f1f1] pl-[14px] pr-[3px] leading-3">No top level part selected.</p>
      </div>
    </div>
  );
}

/* ---------- model drawing ---------- */

function Arrow({ x1, y1, x2, y2, color }) {
  const a = Math.atan2(y2 - y1, x2 - x1);
  const bx = x2 - 14 * Math.cos(a);
  const by = y2 - 14 * Math.sin(a);
  const px = -Math.sin(a) * 3.6;
  const py = Math.cos(a) * 3.6;
  return (
    <g stroke={color} fill={color}>
      <line x1={x1} y1={y1} x2={bx} y2={by} strokeWidth="2.500" />
      <path d={`M${x2} ${y2}L${bx + px} ${by + py}L${bx - px} ${by - py}z`} strokeWidth="0.600" />
    </g>
  );
}

function Wheel({ cx, cy, rx, ry, hx, hy }) {
  const marks = [20, 50, 80, 110, 140, 345, 315];
  return (
    <g>
      <ellipse cx={cx} cy={cy} rx={rx} ry={ry} fill="#0808ee" stroke="#fff" />
      <ellipse cx={cx} cy={cy} rx={rx - 1.500} ry={ry - 1.500} stroke="#0000a8" fill="none" />
      <ellipse cx={hx} cy={hy} rx="19.500" ry="20.500" fill="#f1f1ea" />
      {marks.map((m) => {
        const t = (m * Math.PI) / 180;
        return <line key={m} x1={hx + 13 * Math.cos(t)} y1={hy + 14 * Math.sin(t)} x2={hx + 17 * Math.cos(t + 0.15)} y2={hy + 17 * Math.sin(t + 0.15)} stroke="#222" strokeWidth="1.400" />;
      })}
    </g>
  );
}

function Hub({ x, y }) {
  return (
    <g stroke="#111">
      <circle cx={x} cy={y} r="8" fill="#c9cdd0" strokeWidth="1.300" />
      <circle cx={x} cy={y} r="5.500" fill="#f2f2f2" />
      <circle cx={x} cy={y} r="2.500" fill="#555" />
      <path d={`M${x - 5} ${y}h10M${x} ${y - 5}v10`} strokeWidth="0.700" />
    </g>
  );
}

function Model() {
  return (
    <svg viewBox="36 148 1100 704" preserveAspectRatio="xMidYMid meet" className="pointer-events-none absolute inset-0 size-full" role="img" aria-label="Caster assembly model">
      <defs>
        <linearGradient id="tube" x1="0" x2="1">
          <stop offset="0" stopColor="#7d858c" /><stop offset="0.15" stopColor="#c3ccd6" /><stop offset="0.55" stopColor="#d3dbe6" /><stop offset="0.8" stopColor="#b9c0cf" /><stop offset="1" stopColor="#6d757c" />
        </linearGradient>
        <linearGradient id="bellow" x1="0" x2="1">
          <stop offset="0" stopColor="#7b858b" /><stop offset="0.35" stopColor="#c8cfd4" /><stop offset="0.6" stopColor="#a7b0b7" /><stop offset="1" stopColor="#6a747a" />
        </linearGradient>
        <radialGradient id="ball" cx="0.4" cy="0.38" r="0.65">
          <stop offset="0" stopColor="#fff" /><stop offset="0.15" stopColor="#dbe3ea" /><stop offset="0.6" stopColor="#b9c2c8" /><stop offset="1" stopColor="#7a838a" />
        </radialGradient>
        <filter id="soft" x="-5%" y="-10%" width="110%" height="120%"><feGaussianBlur stdDeviation="1.500" /></filter>
      </defs>

      <path d="M435 727q4-16 28-20h60l0 32 45 12 90-12 110-22 75-14 20 4v24l-170 26-120 12-58 3q2 12-28 14-16 0-14-10-30-2-38-12z" fill="#000" opacity="0.045" filter="url(#soft)" />
      <path d="M520 742l35 10-20 4z" fill="#fff" opacity="0.4" />

      {/* rear caster and block */}
      <path d="M538 632l26-10 3 22-26 4z" fill="#a4abaf" stroke="#fff" />
      <rect x="528.500" y="632" width="27.500" height="63" rx="12" fill="#0808ee" stroke="#fff" />
      <path d="M528 650q14-6 28 0M530 672q12 5 24 0" stroke="#0000a0" fill="none" />
      <path d="M498 600l17-10q20-3 38-2l15 6v23l-30 12-26 12-22-6z" fill="#8b9499" stroke="#30383c" />
      <path d="M568 597l-51 26v17l51-23z" fill="#79838a" stroke="#30383c" />
      <path d="M540 634l26-11M544 638l22-8M566 622v14" stroke="#fff" strokeWidth="1.300" fill="none" />
      <path d="M530 640q1-8 8-8h10q7 0 7 8z" fill="#0808ee" />
      <path d="M558 664l6 5q6-3 2-6M523 664q-5 4 0 6h6" stroke="#fff" strokeWidth="1.500" fill="none" />

      {/* deck board */}
      <path d="M560 640L820 626l33 1q22 2 28 6 4 8-3 16l-5 2L720 657l-130 7h-60z" fill="#8e979c" stroke="#30383c" />
      <path d="M566 645l154-6 160-6q3 4 2 8l-162 6-122 5z" fill="#ccd6e0" />
      <path d="M560 646l160-7 161-7M600 652l120-5 162-7" stroke="#30383c" strokeWidth="0.800" fill="none" />

      {/* front plate */}
      <path d="M434 625q8-8 24-10l40-2 24 6-6 18 50 10q30 0 31 3-24 10-74 15-60 3-89-4z" fill="#8d969b" stroke="#30383c" />
      <path d="M434 635q20 8 50 9 30 0 60-4 38 0 54 8-30 10-78 17-60 2-86-4z" fill="#b2bbc1" stroke="#30383c" strokeWidth="0.900" />
      <path d="M434 644q16 8 52 9M486 644v20" stroke="#30383c" strokeWidth="0.800" fill="none" />
      <path d="M438 629q8-10 32-7l46 12-20 8q-40 0-58-13z" fill="#a9b2b7" stroke="#5a6468" strokeWidth="0.700" />
      <ellipse cx="481" cy="632" rx="34" ry="9" fill="#8f989d" />

      {/* mast */}
      <path
        d="M460 538Q480 532 500 538C503 542 501 543 498 545C499 549 504 551 502 555C500 559 498 558 499 561C500 565 503 567 501 570C498 574 499 575 500 577C503 581 504 583 501 586C499 590 499 592 501 594C505 598 507 600 503 604C499 607 499 608 501 611C507 616 509 622 506 626Q494 634 479 634Q464 634 452 628C447 622 450 616 456 611C461 608 460 606 457 604C452 601 453 598 458 595C461 592 460 590 458 587C454 582 455 579 459 575C462 571 461 570 459 567C456 563 458 561 461 558C462 555 460 554 459 551C457 548 459 546 461 544C458 542 458 540 460 538Z"
        fill="url(#bellow)" stroke="#485056"
      />
      <g fill="none" stroke="#5d676d" strokeWidth="0.900">
        <path d="M461 544Q480 550 498 545M461 558Q480 565 499 561M459 574Q480 582 500 576M458 590Q480 598 501 593M457 606Q480 614 501 609" />
      </g>
      <g fill="none" stroke="#eef2f4" strokeWidth="3" opacity="0.650" strokeLinecap="round">
        <path d="M468 552q8 3 16 2M468 567q8 3 16 2M467 583q8 3 18 2M465 600q8 3 20 2M462 618q8 6 22 4" />
      </g>
      <path d="M469 383h26.500L493.500 537q-14 4-27 0z" fill="url(#tube)" stroke="#3f4a50" />
      <path d="M477 226h16.500L492 378h-18z" fill="url(#tube)" stroke="#3f4a50" />
      <path d="M468 380q15-3 30 0-1 4-15 4t-15-4z" fill="#b9c4cc" stroke="#26343a" strokeWidth="1.500" />
      <circle cx="486" cy="209" r="19" fill="url(#ball)" />

      {/* angle dimension */}
      <g stroke="#7a3cb0" fill="none">
        <path d="M443 620C455 545 500 440 610 431M674 436C745 450 810 520 834 650" />
        <path d="M737 664l88-17M737 664l105 10M443 636q40 2 70-14l50-16" />
        <path d="M440 618h7l-3.500 20z" fill="#7a3cb0" />
      </g>

      {/* front caster */}
      <Wheel cx={501.500} cy={715} rx={31.500} ry={33} hx={494} hy={716} />
      <path d="M457 673l46-1-4 17q-1 20 2 28-6 14-18 8z" fill="#9aa3a7" stroke="#fff" strokeWidth="1.300" />
      <path d="M481 680v36M486 680v22" stroke="#fff" />
      <path d="M455 669q20-6 48 2l-1 5q-30 3-46-3z" fill="#b5bcc0" stroke="#fff" strokeWidth="1.300" />
      <Hub x={490.500} y={716.500} />

      {/* right caster */}
      <Wheel cx={860} cy={700} rx={34} ry={33.500} hx={862} hy={702} />
      <path d="M815 665l49 1 9 36q-4 12-14 10z" fill="#8d969b" stroke="#fff" strokeWidth="1.300" />
      <path d="M845 666v30M851 666v38" stroke="#fff" />
      <path d="M811 656l28-2 18 4-2 6q-30 4-43-3z" fill="#a9b1b5" stroke="#fff" strokeWidth="1.300" />
      <Hub x={863.500} y={702.500} />

      {/* highlighted feature */}
      <g stroke="#1670c8" strokeWidth="2.500" fill="none">
        <path d="M477 634h14M477 641h24M477 649h12M483 632v19" />
        <ellipse cx="495" cy="641" rx="6" ry="8" />
        <path d="M495 633v16" />
      </g>
      <path d="M580.500 588v24" stroke="#2f6fb5" />

      {/* axes */}
      <g fontFamily="Liberation Sans, Arial, sans-serif" fontSize="16" textAnchor="middle">
        <Arrow x1={543} y1={622} x2={544} y2={576} color="#1010c0" />
        <Arrow x1={543} y1={622} x2={497} y2={621} color="#10c020" />
        <text x="543" y="570" fill="#1010c0">Z</text>
        <text x="488" y="627" fill="#10b020" fontSize="12">Y</text>
        <text x="542" y="619" fill="#d01010" fontSize="13">X</text>
        <circle cx="543" cy="622" r="5" fill="#f8e810" stroke="#b0a000" strokeWidth="0.600" />

        <Arrow x1={478} y1={671} x2={520} y2={673} color="#e01010" />
        <Arrow x1={478} y1={671} x2={479} y2={623} color="#1040d0" />
        <ellipse cx="492" cy="666" rx="5" ry="3" fill="#109020" />
        <text x="477" y="619" fill="#1010c0">Z</text>
        <text x="503" y="668" fill="#10b020" fontSize="13">Y</text>
        <text x="528" y="679" fill="#d01010" fontSize="14">X</text>
        <circle cx="478" cy="671" r="5" fill="#f8e810" stroke="#b0a000" strokeWidth="0.600" />

        <rect x="830" y="652" width="8" height="8" fill="#f8d810" />
        <Arrow x1={836} y1={657} x2={881} y2={657} color="#e01010" />
        <Arrow x1={834} y1={657} x2={834} y2={611} color="#1010d0" />
        <path d="M831 655h7l-4 18z" fill="#7040a0" />
        <circle cx="827" cy="653" r="4.500" fill="#109020" />
        <text x="834" y="606" fill="#1010c0">Z</text>
        <text x="890" y="663" fill="#e01010">X</text>

        <Arrow x1={1071} y1={787} x2={1070} y2={833} color="#10d020" />
        <Arrow x1={1071} y1={787} x2={1030} y2={783} color="#e01010" />
        <Arrow x1={1071} y1={787} x2={1047} y2={791} color="#1010c0" />
        <circle cx="1071" cy="787" r="5" fill="#f8f010" stroke="#a8a000" strokeWidth="0.700" />
        <text x="1020" y="787" fill="#c01010">X</text>
        <text x="1040" y="797" fill="#1010c0">Z</text>
        <text x="1069" y="849" fill="#10c020">Y</text>
      </g>

      <text x="645" y="439" textAnchor="middle" fontFamily="Liberation Sans, Arial, sans-serif" fontSize="24" fill="#7a3cb0" stroke="#7a3cb0" strokeWidth="0.500">180°</text>

      <g fontSize="41" fill="#e2e2e2" fontFamily="Liberation Serif, Noto Sans CJK SC, serif" style={{ filter: "drop-shadow(1px 1px 0 #444)" }}>
        <text x="355" y="480" fontSize="47" fontWeight="300">莫西网</text>
        <text x="498" y="479">www. 3dmox. com</text>
      </g>
    </svg>
  );
}

/* ---------- prompt and status bars ---------- */

function PromptBar() {
  return (
    <div className="shrink-0">
      <div className="h-1 bg-[#9aa1a6]" />
      <div className="flex h-7 items-center border-b border-[#9aa0a8] bg-linear-to-b from-[#f5f7fa] to-[#dde1e8] pl-[5px] pr-[7px]">
        <h2 className="flex-1 font-['Open_Sans',sans-serif] text-[14px] text-[#2c4a88]">PromptBar</h2>
        <div className="flex items-center gap-2 font-['Liberation_Serif',serif] font-bold text-[#333]">
          <button aria-label="Larger text" className="flex items-start text-[16px] leading-4">A<Icon w={5} h={6}><path d="M0 4l2-3 2 3z" fill="#333" /></Icon></button>
          <button aria-label="Smaller text" className="-ml-1.5 flex items-start text-[13px] leading-4">A<Icon w={5} h={6}><path d="M0 1h4L2 4z" fill="#333" /></Icon></button>
          <button aria-label="Collapse" className="-ml-1.5"><Icon w={9} h={10}><path d="M1 5l3.500-3L8 5M1 9l3.500-3L8 9" stroke="#111" strokeWidth="1.500" /></Icon></button>
          <button aria-label="Options"><Icon w={10} h={10}><path d="M1 2h8" stroke="#24407c" strokeWidth="2" /><path d="M1 5h8L5 9z" fill="#24407c" /></Icon></button>
          <button aria-label="Pin"><Icon w={8} h={10}><path d="M2 1h4v5H2zM0 6h8M4 6v4M5 1v5" stroke="#24407c" /></Icon></button>
          <button aria-label="Close prompt bar"><Icon w={9} h={9}><path d="M1 1l7 7M8 1L1 8" stroke="#24407c" strokeWidth="1.500" /></Icon></button>
        </div>
      </div>
      <div className="h-[22px] bg-white" />
    </div>
  );
}

const viewTools = [
  ["Zoom area", <Icon key="a"><rect x="1" y="2" width="14" height="13" fill="#e6f0fc" stroke="#2a56a8" /><path d="M1 2h14" stroke="#1c4fb8" strokeWidth="3" /><circle cx="8" cy="9" r="3" stroke="#3a5f94" fill="#cfe6fb" /><path d="M10 11l3 3" stroke="#3a5f94" strokeWidth="1.500" /></Icon>],
  ["Zoom", <Icon key="b"><path d="M10 10l5 5" stroke="#c8862e" strokeWidth="2.500" /><circle cx="6.500" cy="6.500" r="5" fill="#d5e9fa" stroke="#5d7ea6" /><path d="M4.500 5.500h4M6.500 3.500v4M4.500 9h4" stroke="#223" /></Icon>],
  ["Fit", <Icon key="c"><rect x="1" y="2" width="14" height="13" fill="#f2f7fd" stroke="#2a56a8" /><path d="M1 2h14" stroke="#1c4fb8" strokeWidth="3" /><path d="M4 6l8 7M12 6l-8 7M4 8V6h2M10 6h2v2M12 11v2h-2M6 13H4v-2" stroke="#24468c" /></Icon>],
  ["Pan", <Icon key="d"><rect x="1" y="2" width="14" height="13" fill="#e9eff5" stroke="#2a56a8" /><path d="M1 2h14" stroke="#1c4fb8" strokeWidth="3" /><path d="M4 6l2-1 2 0 3 2 4 5v3h-3l-3-2-5-4z" fill="#e8dcc8" stroke="#4c443c" /><path d="M6 6l4 4M8 6l3 3" stroke="#4c443c" strokeWidth="0.700" /></Icon>],
  ["Rotate", <Icon key="e"><path d="M1 11l4-9 4 1 6 2-1 4-4 5-5-1z" fill="#42b83a" stroke="#1c7418" /><circle cx="8" cy="8" r="3.500" fill="#c5e5fb" stroke="#2c6ab8" /></Icon>],
  ["Shaded", <Icon key="f"><path d="M2 4l6-3 6 3v8l-6 3-6-3z" fill="#2b94ea" stroke="#0d5aa8" /><path d="M2 4l6 3 6-3-6-3z" fill="#9cd6ff" /><path d="M8 7v8l6-3V4z" fill="#1470c8" /></Icon>],
  ["View orientation", <Icon key="g"><path d="M2 5l5-3 7 2v8l-5 3-7-3zM2 5l7 2 5-3M9 7v8M7 2v8l-5 2M7 10l7 2" fill="#c4def6" stroke="#2d5e9e" strokeWidth="0.900" /></Icon>],
];

function StatusBar() {
  return (
    <footer className="flex h-[22px] items-stretch border-t border-[#a5abb5] bg-linear-to-b from-[#e0e3e8] via-[#a9afb9] via-50% to-[#c6c8cc] text-[11px] leading-5 text-[#2a2d33]">
      <div className="flex-[392] border-r border-[#8b919c]" />
      <p className="flex-[179] border-r border-[#8b919c] text-center shadow-[inset_1px_0_0_#dfe3e8]">0 items are selected</p>
      <div className="w-[25px]" />
      <input aria-label="Command Finder" defaultValue="Command Finder" className="w-[141px] bg-white pl-1 pb-[3px] text-[#111] outline-none" />
      <div className="flex items-center gap-2 pl-[6px]">
        <button aria-label="Run" className="mr-[3px]"><Icon><path d="M3 14c-2-5 1-8 6-8V3l5 4-5 5V9c-3 0-5 1-6 5z" fill="#48b83c" stroke="#1c6a18" /></Icon></button>
        {viewTools.map(([n, i]) => <button key={n} aria-label={n}>{i}</button>)}
      </div>
      <div className="flex items-center gap-1 pl-[6px]">
        <button aria-label="Zoom out"><Icon><circle cx="8" cy="8" r="7" fill="#e4e9f0" stroke="#4b6288" /><path d="M4.500 8h7" stroke="#24406c" strokeWidth="1.800" /></Icon></button>
        <input type="range" aria-label="Zoom level" defaultValue="44" className="h-4 w-[108px] appearance-none bg-[linear-gradient(#7a828e,#7a828e)] bg-[length:100%_1px] bg-center bg-no-repeat [&::-webkit-slider-thumb]:h-[13px] [&::-webkit-slider-thumb]:w-[9px] [&::-webkit-slider-thumb]:appearance-none [&::-webkit-slider-thumb]:rounded-b-[5px] [&::-webkit-slider-thumb]:border [&::-webkit-slider-thumb]:border-[#4b6288] [&::-webkit-slider-thumb]:bg-[#eef1f5]" />
        <button aria-label="Zoom in"><Icon><circle cx="8" cy="8" r="7" fill="#e4e9f0" stroke="#4b6288" /><path d="M4.500 8h7M8 4.500v7" stroke="#24406c" strokeWidth="1.800" /></Icon></button>
      </div>
      <div className="flex items-center gap-2 pl-2 pr-0.5">
        <button aria-label="Record"><Icon><circle cx="8" cy="8" r="7" fill="#e8c8c8" stroke="#5a2a2a" /><circle cx="8" cy="8" r="5.500" fill="#d80c0c" /></Icon></button>
        <button aria-label="Upload"><Icon><path d="M8 1l7 6h-4v5H5V7H1z" fill="#58d020" stroke="#2a7a10" /><path d="M2 14.500h12" stroke="#2a7a10" strokeWidth="2" /></Icon></button>
        <Icon w={12} h={14}><path d="M9 3h2M6 7h2M9 7h2M3 11h2M6 11h2M9 11h2" stroke="#6c727c" strokeWidth="2" /></Icon>
      </div>
    </footer>
  );
}

/* ---------- page ---------- */

export default function App() {
  return (
    <div className="relative flex min-h-screen flex-col border-t border-l border-[#8a6a4a] bg-[#cba47d] pl-[7px] pr-1 pb-1 font-['Noto_Sans',sans-serif]">
      <div className="-mt-px"><TitleBar /></div>
      <TabRow />
      <Ribbon />
      <main className="flex flex-1 items-stretch bg-[#cfd4de] pt-[3px]">
        <LeftRail />
        <div className="flex min-w-0 flex-1 flex-col">
          <div className="relative flex-1 border-t border-l border-[#6b6f76] bg-linear-to-b from-[#454545] via-[#a3a3a3] via-50% to-white">
            <div className="absolute right-0 bottom-1 flex h-[21px] w-[159px] items-center bg-[#e8eef4]/30 pl-8 font-['Liberation_Serif',serif] text-[13px] text-[#dcdcdc]">Wycinek okna</div>
            <Model />
            <Tree />
          </div>
          <PromptBar />
        </div>
        <RightRail />
      </main>
      <StatusBar />
      <button aria-label="Application menu" className="absolute top-1.5 left-[10px] size-[38px] rounded-full border border-[#8b8f96] bg-radial from-white via-[#eceef0] to-[#b4b8be]">
        <svg viewBox="0 0 36 36" className="size-full" fill="none" aria-hidden="true">
          <path d="M6 15l25-6-5 17-8-7z" fill="#3d9be0" />
          <path d="M6 15l12 4-1 9z" fill="#1c6cc0" />
          <path d="M6 15l25-6-13 10z" fill="#5fb2ee" />
          <path d="M10 6l8 8-5 2z" fill="#f4f6f8" stroke="#8b9098" />
          <path d="M21 14l6 11-9-2z" fill="#fff" stroke="#9aa0a8" strokeWidth="0.700" />
        </svg>
      </button>
    </div>
  );
}
